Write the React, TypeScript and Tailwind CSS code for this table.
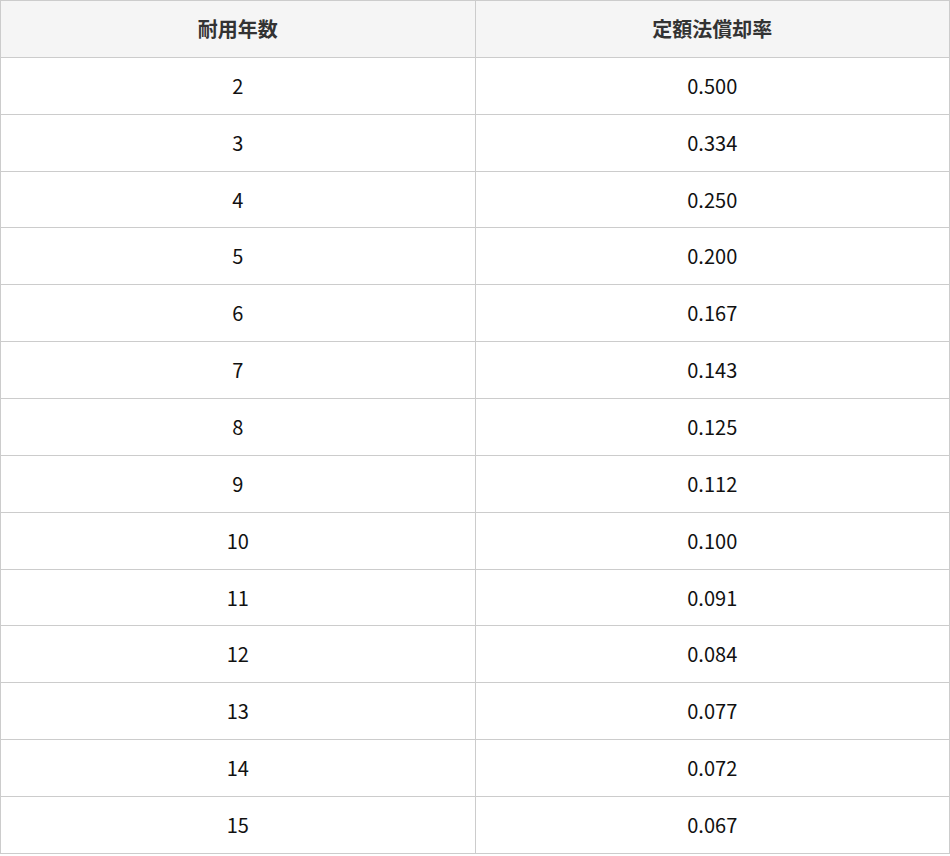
import React from "react";

// 耐用年数ごとの定額法償却率
const rows: [number, string][] = [
  [2, "0.500"],
  [3, "0.334"],
  [4, "0.250"],
  [5, "0.200"],
  [6, "0.167"],
  [7, "0.143"],
  [8, "0.125"],
  [9, "0.112"],
  [10, "0.100"],
  [11, "0.091"],
  [12, "0.084"],
  [13, "0.077"],
  [14, "0.072"],
  [15, "0.067"],
];

export default function App() {
  return (
    <div
      className="w-[950px] bg-white"
      style={{ fontFamily: '"Noto Sans CJK JP", "Noto Sans", sans-serif' }}
    >
      <table className="w-full border-collapse table-fixed text-[20px]">
        <thead>
          <tr className="bg-[#f5f5f5]">
            <th className="h-[56.87px] border border-[#cccccc] font-bold text-[#333333] text-center">
              耐用年数
            </th>
            <th className="h-[56.87px] border border-[#cccccc] font-bold text-[#333333] text-center">
              定額法償却率
            </th>
          </tr>
        </thead>
        <tbody>
          {rows.map(([years, rate]) => (
            <tr key={years}>
              <td className="h-[56.87px] border border-[#cccccc] text-center text-[#111111]">
                {years}
              </td>
              <td className="h-[56.87px] border border-[#cccccc] text-center text-[#111111]">
                {rate}
              </td>
            </tr>
          ))}
        </tbody>
      </table>
    </div>
  );
}
